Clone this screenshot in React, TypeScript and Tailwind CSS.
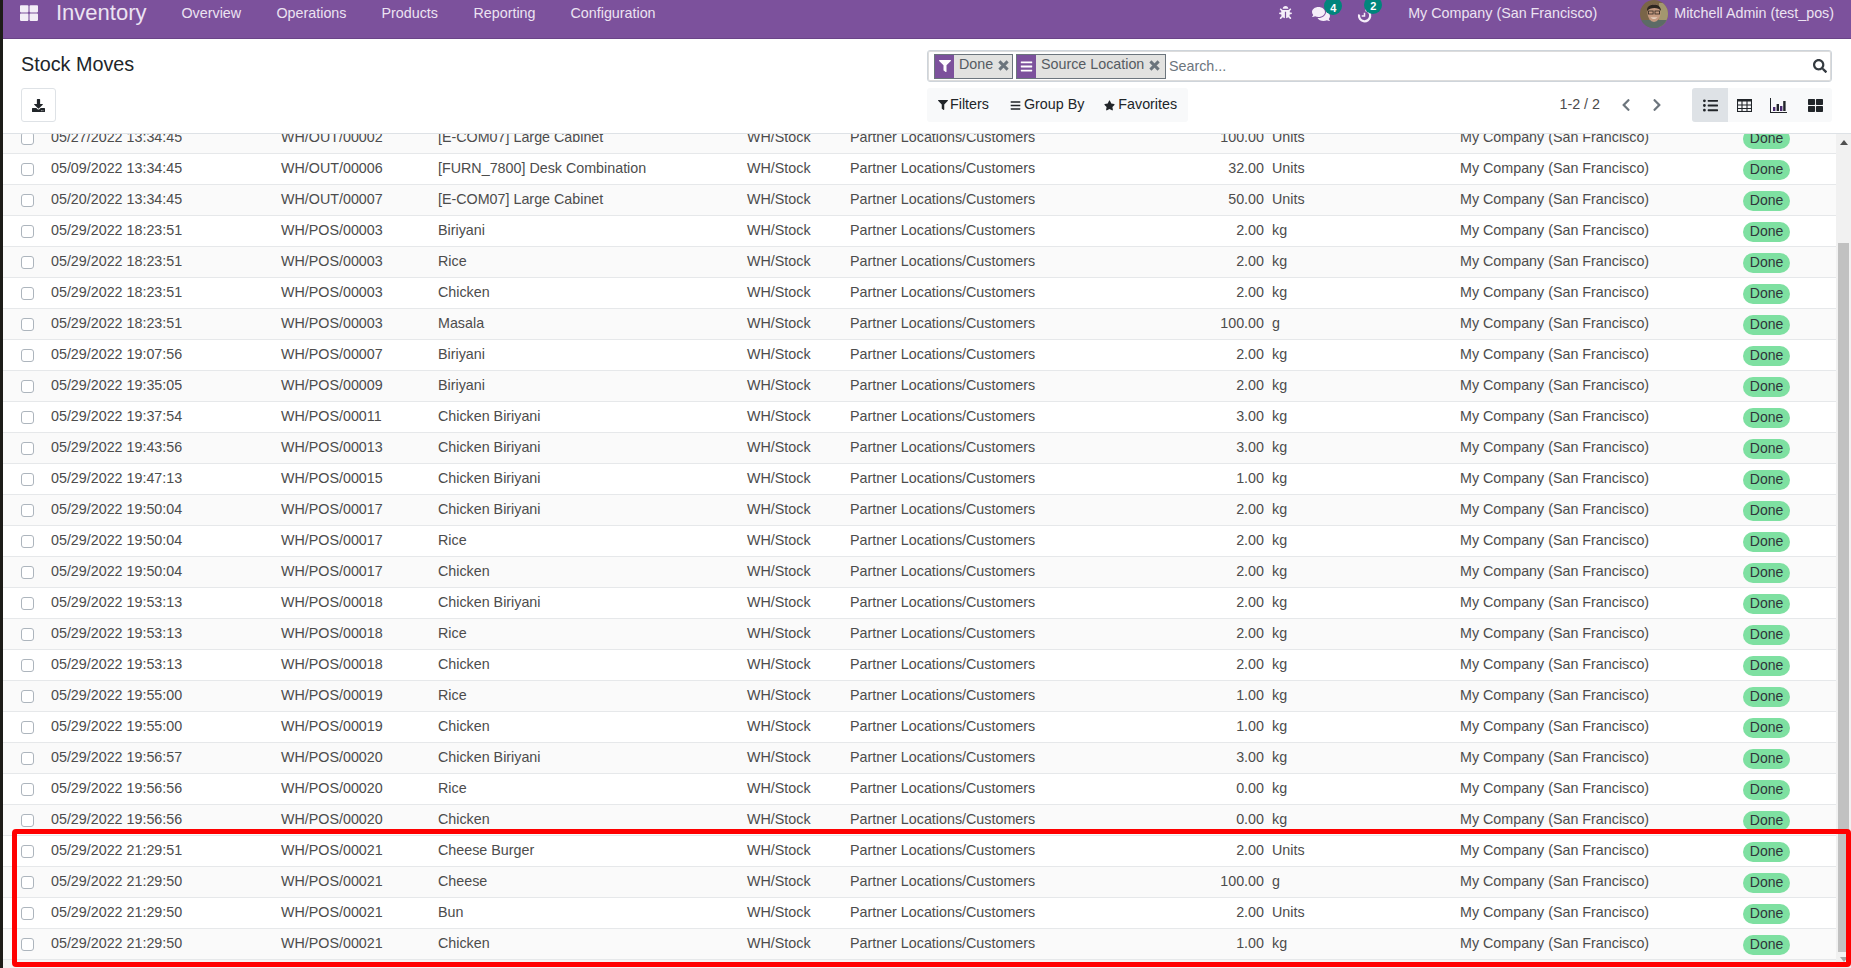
import { FaBug, FaComments, FaDownload, FaFilter, FaListUl, FaSearch, FaStar, FaThLarge, FaBars, FaChevronLeft, FaChevronRight } from "react-icons/fa";

const C = "WH/POS/000";

const rows: [string, string, string, string, string][] = [
  ["05/27/2022 13:34:45", "WH/OUT/00002", "[E-COM07] Large Cabinet", "100.00", "Units"],
  ["05/09/2022 13:34:45", "WH/OUT/00006", "[FURN_7800] Desk Combination", "32.00", "Units"],
  ["05/20/2022 13:34:45", "WH/OUT/00007", "[E-COM07] Large Cabinet", "50.00", "Units"],
  ["05/29/2022 18:23:51", C + "03", "Biriyani", "2.00", "kg"],
  ["05/29/2022 18:23:51", C + "03", "Rice", "2.00", "kg"],
  ["05/29/2022 18:23:51", C + "03", "Chicken", "2.00", "kg"],
  ["05/29/2022 18:23:51", C + "03", "Masala", "100.00", "g"],
  ["05/29/2022 19:07:56", C + "07", "Biriyani", "2.00", "kg"],
  ["05/29/2022 19:35:05", C + "09", "Biriyani", "2.00", "kg"],
  ["05/29/2022 19:37:54", C + "11", "Chicken Biriyani", "3.00", "kg"],
  ["05/29/2022 19:43:56", C + "13", "Chicken Biriyani", "3.00", "kg"],
  ["05/29/2022 19:47:13", C + "15", "Chicken Biriyani", "1.00", "kg"],
  ["05/29/2022 19:50:04", C + "17", "Chicken Biriyani", "2.00", "kg"],
  ["05/29/2022 19:50:04", C + "17", "Rice", "2.00", "kg"],
  ["05/29/2022 19:50:04", C + "17", "Chicken", "2.00", "kg"],
  ["05/29/2022 19:53:13", C + "18", "Chicken Biriyani", "2.00", "kg"],
  ["05/29/2022 19:53:13", C + "18", "Rice", "2.00", "kg"],
  ["05/29/2022 19:53:13", C + "18", "Chicken", "2.00", "kg"],
  ["05/29/2022 19:55:00", C + "19", "Rice", "1.00", "kg"],
  ["05/29/2022 19:55:00", C + "19", "Chicken", "1.00", "kg"],
  ["05/29/2022 19:56:57", C + "20", "Chicken Biriyani", "3.00", "kg"],
  ["05/29/2022 19:56:56", C + "20", "Rice", "0.00", "kg"],
  ["05/29/2022 19:56:56", C + "20", "Chicken", "0.00", "kg"],
  ["05/29/2022 21:29:51", C + "21", "Cheese Burger", "2.00", "Units"],
  ["05/29/2022 21:29:50", C + "21", "Cheese", "100.00", "g"],
  ["05/29/2022 21:29:50", C + "21", "Bun", "2.00", "Units"],
  ["05/29/2022 21:29:50", C + "21", "Chicken", "1.00", "kg"],
];

const menu = [
  { label: "Overview", cls: "w-[95px]" },
  { label: "Operations", cls: "w-[105px]" },
  { label: "Products", cls: "w-[92px]" },
  { label: "Reporting", cls: "w-[97px]" },
  { label: "Configuration", cls: "" },
];

const Badge = ({ n, cls }: { n: number; cls: string }) => (
  <span className={`absolute flex h-[18px] w-[18px] items-center justify-center rounded-full bg-[#00857c] text-[11px] font-bold text-white ${cls}`}>
    {n}
  </span>
);

const Avatar = () => (
  <svg viewBox="0 0 28 28" className="h-7 w-7 rounded-full">
    <rect width="28" height="28" fill="#7a6548" />
    <rect x="19" y="3" width="9" height="25" fill="#a3966f" />
    <rect x="0" y="20" width="28" height="8" fill="#5c6b66" />
    <ellipse cx="14" cy="13" rx="6.5" ry="9" fill="#c59a80" />
    <path d="M7 11 C6 3 21 2 21 11 C19 7 10 7 7 11Z" fill="#2e2620" />
    <rect x="8.5" y="11" width="4.6" height="3" fill="none" stroke="#2e2620" strokeWidth="0.8" />
    <rect x="15" y="11" width="4.6" height="3" fill="none" stroke="#2e2620" strokeWidth="0.8" />
    <path d="M10.5 17.5 Q14 20 17.5 17.5" fill="#f2e6da" />
  </svg>
);

const HistoryIcon = () => (
  <svg viewBox="0 0 16 16" className="h-[15px] w-[15px]" fill="none" stroke="#f5eef9" strokeWidth="2.4">
    <path d="M9 2.2 A6 6 0 1 1 2.2 7" />
    <path d="M8 5 V8.5 H5" strokeWidth="1.6" />
  </svg>
);

const BarsChart = () => (
  <svg viewBox="0 0 17 15" className="h-[15px] w-[17px]" fill="#212529">
    <path d="M0 0h1v14h16v1H0z" />
    <rect x="3" y="9" width="2.4" height="4" fill="#4a2a70" />
    <rect x="6.6" y="6" width="2.4" height="7" />
    <rect x="10" y="8" width="2.4" height="5" fill="#4a2a70" />
    <rect x="13.2" y="3" width="2.4" height="10" />
  </svg>
);

const GridIcon = () => (
  <svg viewBox="0 0 15 13" className="h-[13px] w-[15px]" fill="none" stroke="#212529" strokeWidth="1.1">
    <rect x="0.5" y="0.5" width="14" height="12" />
    <path d="M0 1.5h15" strokeWidth="2" />
    <path d="M0 6h15M0 9.5h15M5 1v12M10 1v12" />
  </svg>
);

const Cross = () => (
  <svg viewBox="0 0 12 12" className="mt-[2px] h-[11px] w-[11px]" stroke="#6c757d" strokeWidth="3.2">
    <path d="M1.5 1.5l9 9M10.5 1.5l-9 9" />
  </svg>
);

const Facet = ({ icon, label, cls }: { icon: React.ReactNode; label: string; cls: string }) => (
  <div className={`flex h-[25px] items-stretch border border-[#6c757d] bg-[#e2e2e0] ${cls}`}>
    <span className="flex w-[19px] shrink-0 items-center justify-center bg-[#7c519c] text-white">{icon}</span>
    <span className="flex items-center gap-[5px] pb-[3px] pl-[5px] text-[14.3px] leading-none text-[#555b62]">
      {label}
      <Cross />
    </span>
  </div>
);

const Row = ({ row, odd }: { row: (typeof rows)[number]; odd: boolean }) => (
  <div
    className={`grid h-[31px] shrink-0 grid-cols-[18px_30px_230px_157px_309px_103px_414px_196px_283px_1fr] items-center border-b border-[#e6e8ea] text-[14.3px] text-[#4c4c4c] ${odd ? "bg-[#fafafa]" : "bg-white"}`}
  >
    <span />
    <span className="h-[13px] w-[13px] rounded-[3px] border border-[#adb5bd] bg-white" />
    <span>{row[0]}</span>
    <span>{row[1]}</span>
    <span>{row[2]}</span>
    <span>WH/Stock</span>
    <span className="flex justify-between">
      <span>Partner Locations/Customers</span>
      <span>{row[3]}</span>
    </span>
    <span className="pl-2">{row[4]}</span>
    <span>My Company (San Francisco)</span>
    <span>
      <span className="mt-[1px] flex h-5 w-[47px] items-center justify-center rounded-full bg-[#7ee0a1] text-[14px] text-[#2f353a]">Done</span>
    </span>
  </div>
);

export default function App() {
  return (
    <div className="relative flex h-[968px] w-[1851px] overflow-hidden bg-white font-['Liberation_Sans',Arial,sans-serif]">
      <div className="w-[3px] shrink-0 bg-[#1d1c18]" />
      <div className="flex min-w-0 flex-1 flex-col">
        {/* top bar */}
        <header className="flex h-[39px] shrink-0 border-b border-[#6a4487] bg-[#7c519c] text-[14.3px] text-[#ece3f2]">
          <FaThLarge className="ml-[17px] mt-[4px] text-[18px] text-[#f3edf7]" />
          <span className="ml-[18px] text-[22px] leading-[26px] text-[#ece3f2]">Inventory</span>
          <nav className="ml-[35px] flex leading-[26px]">
            {menu.map((m) => (
              <span key={m.label} className={m.cls}>{m.label}</span>
            ))}
          </nav>
          <div className="ml-auto flex pr-[17px]">
            <FaBug className="mr-[20px] mt-[6px] text-[13px] text-[#f5eef9]" />
            <span className="relative mr-[27px] mt-[5px] h-[17px]">
              <FaComments className="text-[18px] text-[#f5eef9]" />
              <Badge n={4} cls="left-[12px] -top-[8px] pt-[4px]" />
            </span>
            <span className="relative mr-[36px] mt-[8px] h-[15px]">
              <HistoryIcon />
              <Badge n={2} cls="left-[7px] -top-[12px] pt-[2px]" />
            </span>
            <span className="mr-[43px] leading-[26px]">My Company (San Francisco)</span>
            <Avatar />
            <span className="ml-[6px] leading-[26px]">Mitchell Admin (test_pos)</span>
          </div>
        </header>

        {/* control panel */}
        <div className="flex h-[95px] shrink-0 justify-between border-b border-[#dee2e6] pl-[18px] pr-[19px]">
          <div className="flex flex-col">
            <h1 className="mt-[13px] text-[19.8px] leading-[24px] text-[#212529]">Stock Moves</h1>
            <button className="mt-[12px] flex h-[34px] w-[35px] items-center justify-center rounded-[3px] border border-[#dee2e6] text-[13px] text-[#212529]">
              <FaDownload />
            </button>
          </div>
          <div className="flex w-[905px] flex-col">
            <div className="mt-[11px] flex h-[32px] items-center rounded-[3px] border border-[#ced4da] pl-[6px] pr-[4px] shadow-[inset_0_0_0_1px_#dcdcdc]">
              <Facet icon={<FaFilter className="text-[12px]" />} label="Done" cls="w-[79px]" />
              <Facet icon={<FaBars className="text-[13px]" />} label="Source Location" cls="ml-[3px] w-[150px]" />
              <span className="ml-[3px] pt-[1px] text-[14.3px] text-[#6c757d]">Search...</span>
              <FaSearch className="ml-auto text-[14px] text-[#343a40]" />
            </div>
            <div className="mt-[6px] flex items-center justify-between">
              <div className="flex h-[34px] w-[261px] items-center rounded-[3px] bg-[#f8f9fa] pl-[11px] text-[14.3px] text-[#212529]">
                <FaFilter className="text-[10px]" />
                <span className="ml-[2px]">Filters</span>
                <FaBars className="ml-[21px] text-[11px]" />
                <span className="ml-[3px]">Group By</span>
                <FaStar className="ml-[20px] text-[11px]" />
                <span className="ml-[3px]">Favorites</span>
              </div>
              <div className="flex items-center">
                <span className="text-[14.3px] text-[#4c4c4c]">1-2 / 2</span>
                <FaChevronLeft className="ml-[19px] text-[14px] text-[#6c757d]" />
                <FaChevronRight className="ml-[17px] text-[14px] text-[#6c757d]" />
                <div className="ml-[28px] flex h-[34px] w-[140px] items-stretch overflow-hidden rounded-[3px] bg-[#f8f9fa] text-[15px] text-[#212529]">
                  <span className="flex w-[36px] items-center justify-center bg-[#dee2e6]"><FaListUl /></span>
                  <span className="flex w-[32px] items-center justify-center"><GridIcon /></span>
                  <span className="flex w-[37px] items-center justify-center"><BarsChart /></span>
                  <span className="flex w-[35px] items-center justify-center pl-[2px]"><FaThLarge /></span>
                </div>
              </div>
            </div>
          </div>
        </div>

        {/* list */}
        <div className="flex min-h-0 flex-1">
          <div className="flex min-w-0 flex-1 flex-col overflow-hidden bg-[#f4f4f4]">
            <div className="-mt-[11px] flex flex-col">
              {rows.map((r, i) => (
                <Row key={i} row={r} odd={i % 2 === 0} />
              ))}
            </div>
          </div>
          <div className="flex w-[15px] shrink-0 flex-col items-center bg-[#f1f1f1]">
            <span className="mt-[6px] h-0 w-0 border-x-[4px] border-b-[5px] border-x-transparent border-b-[#505050]" />
            <span className="mt-[98px] h-[709px] w-[11px] bg-[#c1c1c1]" />
            <span className="mt-[5px] h-0 w-0 border-x-[4px] border-t-[5px] border-x-transparent border-t-[#a3a3a3]" />
          </div>
        </div>
      </div>

      {/* red annotation over the last rows */}
      <div className="absolute left-[12px] top-[829px] h-[138px] w-[1839px] rounded-[4px] border-[5px] border-[#ff0000]" />
    </div>
  );
}
